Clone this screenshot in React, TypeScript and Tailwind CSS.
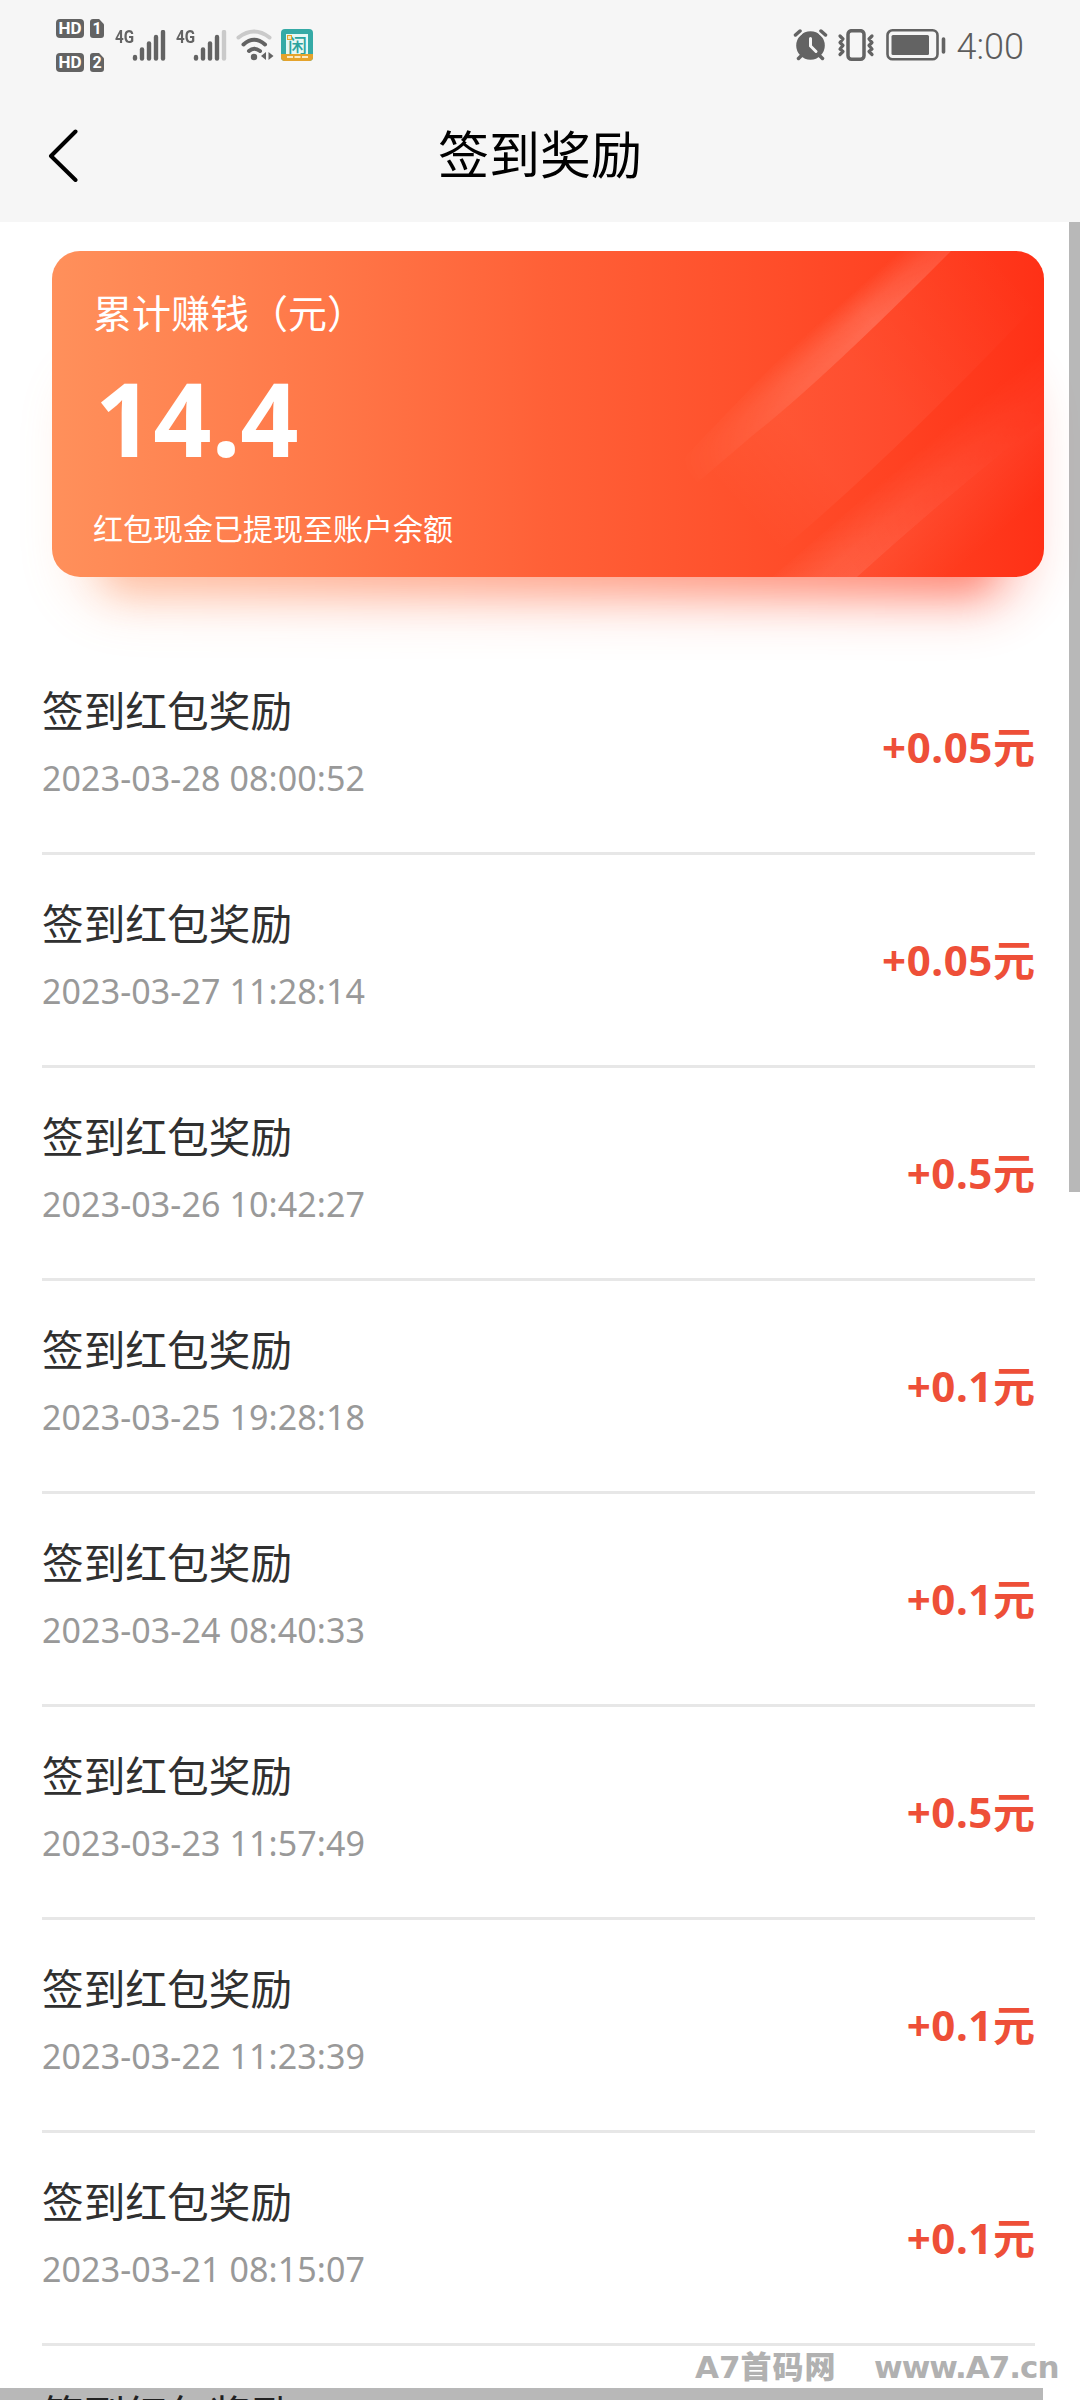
import type { ReactNode } from "react";

const records = [
  { time: "2023-03-28 08:00:52", amount: "0.05" },
  { time: "2023-03-27 11:28:14", amount: "0.05" },
  { time: "2023-03-26 10:42:27", amount: "0.5" },
  { time: "2023-03-25 19:28:18", amount: "0.1" },
  { time: "2023-03-24 08:40:33", amount: "0.1" },
  { time: "2023-03-23 11:57:49", amount: "0.5" },
  { time: "2023-03-22 11:23:39", amount: "0.1" },
  { time: "2023-03-21 08:15:07", amount: "0.1" },
];

const SimBadge = ({ slot }: { slot: string }) => (
  <div className="flex h-[19px] gap-[6px] text-white font-['Roboto',sans-serif] font-bold">
    <span className="flex w-[28px] items-center justify-center rounded-[4px] bg-[#636363] text-[17px] leading-none">
      HD
    </span>
    <span className="flex w-[14px] items-center justify-center rounded-[3px] bg-[#636363] text-[16px] leading-none [clip-path:polygon(0_0,65%_0,100%_28%,100%_100%,0_100%)]">
      {slot}
    </span>
  </div>
);

const Signal = ({ level }: { level: number }) => (
  <div className="flex h-[31px]">
    <span className="h-[18px] w-[17px] origin-left scale-x-[0.8] text-[19px] leading-[13px] font-bold text-[#636363] font-['Roboto',sans-serif]">
      4G
    </span>
    <svg className="h-[31px] w-[34px]" viewBox="0 0 34 31">
      {[27, 19.5, 13.5, 7, 2].map((top, i) => (
        <path
          key={top}
          d={`M${3 + i * 7} ${top}V28.5`}
          stroke={i < level ? "#636363" : "#cacaca"}
          strokeWidth="4.4"
          strokeLinecap="round"
        />
      ))}
    </svg>
  </div>
);

const WifiIcon = () => (
  <svg className="h-[33px] w-[38px]" viewBox="0 0 38 33" fill="none" strokeWidth="4" strokeLinecap="round">
    <path d="M2.500 8.500Q18 -3.500 33.500 8.500" stroke="#cacaca" />
    <path d="M7.500 15.500Q18 6 29 15.500" stroke="#636363" />
    <path d="M13 22Q18 17.500 24 22" stroke="#636363" />
    <circle cx="18" cy="28" r="3.200" fill="#636363" />
    <path d="M30 23v8l-5-4zM32.500 23v8l5-4z" fill="#636363" />
  </svg>
);

const AppBadge = () => (
  <div className="relative size-[32px] overflow-hidden rounded-[4px] bg-[#35aaa6]">
    <div className="absolute left-[5px] top-[5px] h-[21px] w-[22px] bg-[#e6f8f5]" />
    <span className="absolute left-[7px] top-[5px] text-[19px] leading-[21px] font-medium text-[#2ba39f] font-['Noto_Sans_CJK_SC',sans-serif]">
      闲
    </span>
    <div className="absolute left-[6px] top-[6px] size-[5px] border border-[#e2a52e] bg-[#fbe6b8]" />
    <div className="absolute bottom-0 left-0 h-[7px] w-full bg-[#e5a32c]" />
    <div className="absolute bottom-[3px] left-[6px] w-[21px] border-t-2 border-dashed border-[#fbeac4]" />
  </div>
);

const AlarmIcon = () => (
  <svg className="h-[32px] w-[35px]" viewBox="0 0 35 32" fill="none" stroke="#636363" strokeWidth="3.500" strokeLinecap="round">
    <circle cx="17.500" cy="16.500" r="14.300" fill="#636363" stroke="none" />
    <path d="M3.500 6L7 3M31.500 6L28 3" stroke="#f6f6f6" strokeWidth="6" />
    <path d="M2.500 6L7 2M32.500 6L28 2M5.500 29.500L9 26M29.500 29.500L26 26" />
    <path d="M17.500 9.500V17L23 22.500" stroke="#f6f6f6" strokeWidth="3" />
  </svg>
);

const VibrateIcon = () => (
  <svg className="h-[32px] w-[38px]" viewBox="0 0 38 32" fill="none" stroke="#636363" strokeWidth="3.200" strokeLinecap="round" strokeLinejoin="round">
    <rect x="11" y="1.700" width="16" height="28.500" rx="3.500" strokeWidth="3.500" />
    <path d="M3 7L6 10L3 13.500L6 16.500L3 20L6 22.500L3 25.500M35 7L32 10L35 13.500L32 16.500L35 20L32 22.500L35 25.500" />
  </svg>
);

const BatteryIcon = () => (
  <svg className="h-[32px] w-[60px]" viewBox="0 0 60 32" fill="none">
    <rect x="1.500" y="1.300" width="50" height="29" rx="5" stroke="#636363" strokeWidth="2.600" />
    <rect x="5.500" y="6" width="37.500" height="20" rx="1.500" fill="#636363" />
    <path d="M57.500 10v13" stroke="#636363" strokeWidth="3.600" strokeLinecap="round" />
  </svg>
);

// Light streaks in the right half of the card
const CardShine = () => (
  <svg className="absolute inset-0 h-full w-full" viewBox="0 0 992 326" fill="none">
    <defs>
      <linearGradient id="beam" gradientUnits="userSpaceOnUse" x1="800" y1="90" x2="776" y2="63">
        <stop stopColor="#fff" stopOpacity="0.200" />
        <stop offset="0.400" stopColor="#fff" stopOpacity="0.150" />
        <stop offset="1" stopColor="#fff" stopOpacity="0" />
      </linearGradient>
      <linearGradient id="beamFade" gradientUnits="userSpaceOnUse" x1="899" y1="0" x2="640" y2="234">
        <stop stopColor="#fff" stopOpacity="0.600" />
        <stop offset="0.300" stopColor="#fff" />
        <stop offset="0.600" stopColor="#fff" stopOpacity="0.700" />
        <stop offset="1" stopColor="#fff" stopOpacity="0" />
      </linearGradient>
      <linearGradient id="sheet" gradientUnits="userSpaceOnUse" x1="960" y1="20" x2="690" y2="260">
        <stop stopColor="#fff" stopOpacity="0" />
        <stop offset="0.500" stopColor="#fff" stopOpacity="0.050" />
        <stop offset="0.750" stopColor="#fff" stopOpacity="0.050" />
        <stop offset="1" stopColor="#fff" stopOpacity="0" />
      </linearGradient>
      <linearGradient id="band" gradientUnits="userSpaceOnUse" x1="900" y1="246" x2="862" y2="201">
        <stop stopColor="#fff" stopOpacity="0.130" />
        <stop offset="0.400" stopColor="#fff" stopOpacity="0.110" />
        <stop offset="1" stopColor="#fff" stopOpacity="0" />
      </linearGradient>
      <linearGradient id="bandFade" gradientUnits="userSpaceOnUse" x1="992" y1="169" x2="805" y2="326">
        <stop stopColor="#fff" stopOpacity="0.300" />
        <stop offset="1" stopColor="#fff" />
      </linearGradient>
      <linearGradient id="corner" gradientUnits="userSpaceOnUse" x1="900" y1="246" x2="938" y2="291">
        <stop stopColor="#fff" stopOpacity="0.050" />
        <stop offset="1" stopColor="#fff" stopOpacity="0" />
      </linearGradient>
      <mask id="beamMask">
        <path d="M0 0H992V326H0z" fill="url(#beamFade)" />
      </mask>
      <mask id="bandMask">
        <path d="M0 0H992V326H0z" fill="url(#bandFade)" />
      </mask>
    </defs>
    <path d="M899 0Q770 130 700 185L610 262L640 326L700 326L729 299Q830 215 970 69L992 45V0z" fill="url(#sheet)" />
    <path d="M830 0H899Q770 130 700 185L610 262L600 240z" fill="url(#beam)" mask="url(#beamMask)" />
    <path d="M992 169Q900 240 805 326H720L992 90z" fill="url(#band)" mask="url(#bandMask)" />
    <path d="M992 169Q900 240 805 326H992z" fill="url(#corner)" />
  </svg>
);

const Header = () => (
  <header className="h-[222px] bg-[#f6f6f6]">
    <div className="flex h-[90px] items-start justify-between pl-[56px] pr-[56px]">
      <div className="flex">
        <div className="mt-[19px] flex flex-col gap-[15px]">
          <SimBadge slot="1" />
          <SimBadge slot="2" />
        </div>
        <div className="ml-[11px] mt-[30px] flex gap-[10px]">
          <Signal level={5} />
          <Signal level={4} />
        </div>
        <div className="ml-[9px] mt-[29px] flex gap-[7px]">
          <WifiIcon />
          <AppBadge />
        </div>
      </div>
      <div className="mt-[29px] flex">
        <AlarmIcon />
        <div className="ml-[9px]">
          <VibrateIcon />
        </div>
        <div className="ml-[11px]">
          <BatteryIcon />
        </div>
        <span className="ml-[11px] text-[36px] leading-[37px] font-light text-[#5c5c5c] font-['Roboto',sans-serif]">4:00</span>
      </div>
    </div>
    <div className="grid h-[132px] grid-cols-3 items-center pb-[3px]">
      <svg className="ml-[47px] h-[54px] w-[34px]" viewBox="0 0 34 54" fill="none">
        <path d="M28.500 3.500L4 28L28.500 52" stroke="#000" strokeWidth="4" strokeLinecap="round" strokeLinejoin="round" />
      </svg>
      <h1 className="pb-[2px] text-center text-[51px] leading-[60px] whitespace-nowrap text-black">签到奖励</h1>
    </div>
  </header>
);

const Card = ({ children }: { children: ReactNode }) => (
  <section className="relative ml-[52px] mt-[29px] h-[326px] w-[992px]">
    <div className="absolute inset-x-[12px] top-[110px] -bottom-[36px] rounded-[60px] bg-linear-to-r from-[#ff8f5a]/60 to-[#ff3418] opacity-25 blur-[24px]" />
    <div className="absolute inset-x-[50px] top-[110px] -bottom-[16px] rounded-[28px] bg-linear-to-r from-[#ff8f5a] to-[#ff3418] opacity-45 blur-[18px]" />
    <div className="relative h-full overflow-hidden rounded-[28px] bg-linear-to-r from-[#ff905b] via-[#ff6037] to-[#ff3016] px-[41px] text-white">
      <CardShine />
      {children}
    </div>
  </section>
);

export default function App() {
  return (
    <div className="relative h-[2400px] w-[1080px] overflow-hidden bg-white font-['Noto_Sans','Noto_Sans_CJK_SC',sans-serif]">
      <Header />

      <Card>
        <div className="relative flex flex-col">
          <p className="mt-[38px] text-[39px] leading-[48px]">累计赚钱（元）</p>
          <p className="ml-[2px] mt-[29px] text-[102px] leading-[104px] font-bold">14.4</p>
          <p className="mt-[39px] text-[30px] leading-[40px]">红包现金已提现至账户余额</p>
        </div>
      </Card>

      {/* Records */}
      <ul className="mx-[42px] mt-[65px] w-[993px]">
        {records.map((item) => (
          <li key={item.time} className="flex h-[213px] items-center justify-between border-b-[3px] border-[#e7e7e7]">
            <div className="pb-[11px]">
              <p className="text-[41.7px] leading-[56px] text-[#303030]">签到红包奖励</p>
              <p className="mt-[17px] text-[34px] leading-[44px] tracking-[0.1px] text-[#999]">{item.time}</p>
            </div>
            <p className="pb-[1px] text-[42px] leading-[56px] font-bold text-[#ee4f38]">
              <span className="tracking-[0.6px]">+{item.amount}</span>元
            </p>
          </li>
        ))}
        <li className="pt-[41px] text-[41.7px] leading-[56px] text-[#303030]">签到红包奖励</li>
      </ul>

      {/* Scrollbars */}
      <div className="absolute right-0 top-[222px] h-[970px] w-[11px] bg-black/28" />
      <div className="absolute bottom-0 left-0 h-[12px] w-[1043px] bg-black/28" />

      <div className="absolute left-[695px] top-[2350px] flex items-center whitespace-nowrap text-[31px] leading-[34px] font-bold text-[#b1b1b1] font-['DejaVu_Sans','Noto_Sans_CJK_SC',sans-serif]">
        <span className="w-[179px]">
          A7<span className="font-black tracking-[1px]">首码网</span>
        </span>
        <span className="tracking-[-1px]">www.A7.cn</span>
      </div>
    </div>
  );
}
